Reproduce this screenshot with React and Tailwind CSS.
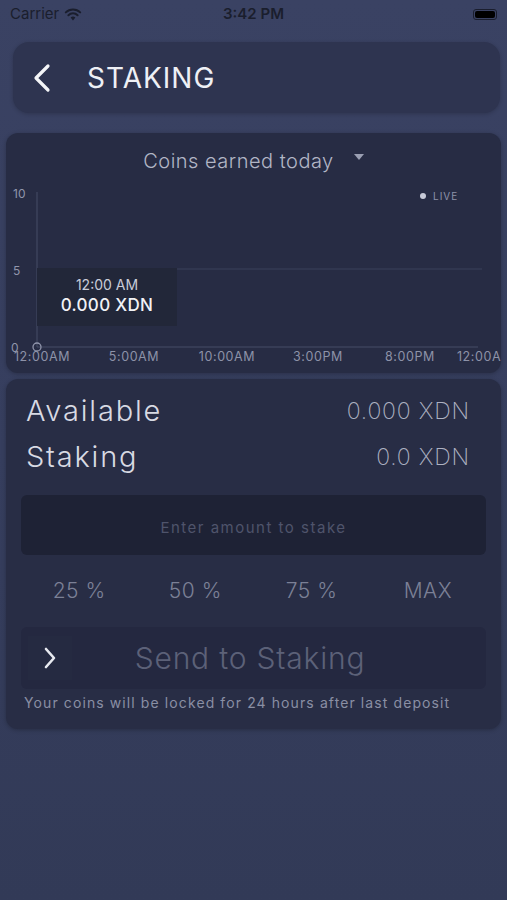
import React from "react";

const xLabels = [
  { t: "12:00AM", x: 36 },
  { t: "5:00AM", x: 128 },
  { t: "10:00AM", x: 221 },
  { t: "3:00PM", x: 312 },
  { t: "8:00PM", x: 404 },
  { t: "12:00AM", x: 479 },
];

const StatusBar = () => (
  <div className="h-[28px] flex items-center justify-between px-[10px] text-[#1a1e2d] text-[15px]" style={{ fontFamily: "Inter, sans-serif" }}>
    <div className="flex items-center gap-[5px] w-[120px]">
      <span>Carrier</span>
      <svg width="18" height="13" viewBox="0 0 18 13">
        <path d="M9 12.5 L6.6 9.6 A3.6 3.6 0 0 1 11.4 9.6 Z" fill="#1a1e2d" />
        <path d="M4.4 7.2 A6.6 6.6 0 0 1 13.6 7.2" stroke="#1a1e2d" strokeWidth="2" fill="none" strokeLinecap="round" />
        <path d="M1.8 4.4 A10.4 10.4 0 0 1 16.2 4.4" stroke="#1a1e2d" strokeWidth="2" fill="none" strokeLinecap="round" />
      </svg>
    </div>
    <span className="font-semibold">3:42 PM</span>
    <div className="w-[120px] flex justify-end">
      <div className="w-[24px] h-[11px] rounded-[3px] border border-[#1a1e2e] p-[1px] flex">
        <div className="flex-1 bg-black rounded-[2px]" />
      </div>
    </div>
  </div>
);

const Chart = () => (
  <svg width="497" height="200" viewBox="0 0 497 200" className="block">
    {/* axes */}
    <line x1="31" y1="19" x2="31" y2="174" stroke="#474d66" strokeWidth="1" />
    <line x1="31" y1="96" x2="476" y2="96" stroke="#3a405a" strokeWidth="1" />
    <line x1="31" y1="174" x2="472" y2="174" stroke="#474d66" strokeWidth="1" />
    <text x="7" y="25" fill="#9095ab" fontSize="12" fontFamily="Inter, sans-serif">10</text>
    <text x="7" y="102" fill="#9095ab" fontSize="12" fontFamily="Inter, sans-serif">5</text>
    <text x="5" y="179" fill="#9095ab" fontSize="12" fontFamily="Inter, sans-serif">0</text>
    {/* tooltip */}
    <rect x="31" y="95" width="140" height="58" fill="#222739" />
    <text x="101" y="117" textAnchor="middle" fill="#c9ccd8" fontSize="14" fontFamily="Inter, sans-serif">12:00 AM</text>
    <text x="101" y="138" textAnchor="middle" fill="#f1f2f6" fontSize="17" fontWeight="500" letterSpacing="0.3" fontFamily="Inter, sans-serif">0.000 XDN</text>
    <circle cx="31" cy="174" r="4" fill="none" stroke="#9095ab" strokeWidth="1.3" />
    {xLabels.map((l) => (
      <text key={l.t + l.x} x={l.x} y="188" textAnchor="middle" fill="#8d92a8" fontSize="12.5" letterSpacing="0.6" fontFamily="Inter, sans-serif">
        {l.t}
      </text>
    ))}
    {/* live */}
    <circle cx="417" cy="23" r="3" fill="#c7cad8" />
    <text x="427" y="27" fill="#8d92a8" fontSize="10" letterSpacing="1" fontFamily="Inter, sans-serif">LIVE</text>
  </svg>
);

export default function App() {
  return (
    <div
      className="w-[507px] h-[900px] overflow-hidden bg-gradient-to-b from-[#3a4263] via-[#363e5e] to-[#323a57]"
      style={{ fontFamily: "Inter, 'DejaVu Sans', sans-serif" }}
    >
      <StatusBar />
      {/* header */}
      <div className="pl-[13px] pr-[7px] pt-[14px]">
        <div className="h-[71px] rounded-[16px] bg-[#2e3450] flex items-center px-[20px] shadow-[0_1px_4px_rgba(0,0,0,0.2)]">
          <svg width="20" height="30" viewBox="0 0 20 30" className="mr-[34px]">
            <path d="M15 3 L3 15 L15 27" stroke="#f4f5f8" strokeWidth="3.2" fill="none" strokeLinecap="round" strokeLinejoin="round" />
          </svg>
          <span className="text-[#eef0f5] text-[28px] tracking-[1px]">STAKING</span>
        </div>
      </div>

      {/* chart card */}
      <div className="mx-[6px] mt-[20px] h-[240px] rounded-[12px] bg-[#272c44] shadow-[0_1px_4px_rgba(0,0,0,0.25)] overflow-hidden">
        <div className="h-[40px] flex items-end justify-center">
          <span className="text-[#b2b6c6] text-[20px] font-light tracking-[0.5px] leading-none pb-[2px]">Coins earned today</span>
          <svg width="10" height="6" viewBox="0 0 10 6" className="ml-[20px] mb-[13px]">
            <path d="M0 0 L10 0 L5 6 Z" fill="#9a9fb2" />
          </svg>
        </div>
        <Chart />
      </div>

      {/* staking card */}
      <div className="mx-[6px] mt-[6px] h-[350px] rounded-[12px] bg-[#282d45] shadow-[0_1px_4px_rgba(0,0,0,0.25)] px-[15px] pt-[12px]">
        <div className="flex items-center justify-between pl-[5px] pr-[16px] h-[40px]">
          <span className="text-[#d8dae3] text-[29px] font-light tracking-[1.8px]">Available</span>
          <span className="text-[#aeb2c2] text-[23px] font-extralight tracking-[0.8px]">0.000 XDN</span>
        </div>
        <div className="flex items-center justify-between pl-[5px] pr-[16px] h-[40px] mt-[6px]">
          <span className="text-[#d8dae3] text-[29px] font-light tracking-[1.8px]">Staking</span>
          <span className="text-[#aeb2c2] text-[23px] font-extralight tracking-[0.8px]">0.0 XDN</span>
        </div>
        <div className="mt-[18px] h-[60px] rounded-[6px] bg-[#1e2235] flex items-center justify-center pt-[6px]">
          <span className="text-[#4f546b] text-[15px] tracking-[1.5px]">Enter amount to stake</span>
        </div>
        <div className="grid grid-cols-4 h-[72px] items-center text-[#7b8096] text-[21px] font-light tracking-[0.5px]">
          <span className="text-center">25 %</span>
          <span className="text-center">50 %</span>
          <span className="text-center">75 %</span>
          <span className="text-center">MAX</span>
        </div>
        <div className="h-[62px] rounded-[6px] bg-[#242840] flex items-center px-[7px]">
          <div className="w-[44px] h-[44px] bg-[#252a41] flex items-center justify-center">
            <svg width="14" height="22" viewBox="0 0 14 22">
              <path d="M3 2 L11 11 L3 20" stroke="#e8eaf0" strokeWidth="2.6" fill="none" strokeLinecap="round" strokeLinejoin="round" />
            </svg>
          </div>
          <span className="flex-1 text-center pr-[51px] text-[#5c6178] text-[30px] font-light tracking-[0.8px]">Send to Staking</span>
        </div>
        <p className="mt-[3px] px-[3px] text-[#8a8fa4] text-[14px] tracking-[1.1px]">
          Your coins will be locked for 24 hours after last deposit
        </p>
      </div>
    </div>
  );
}
